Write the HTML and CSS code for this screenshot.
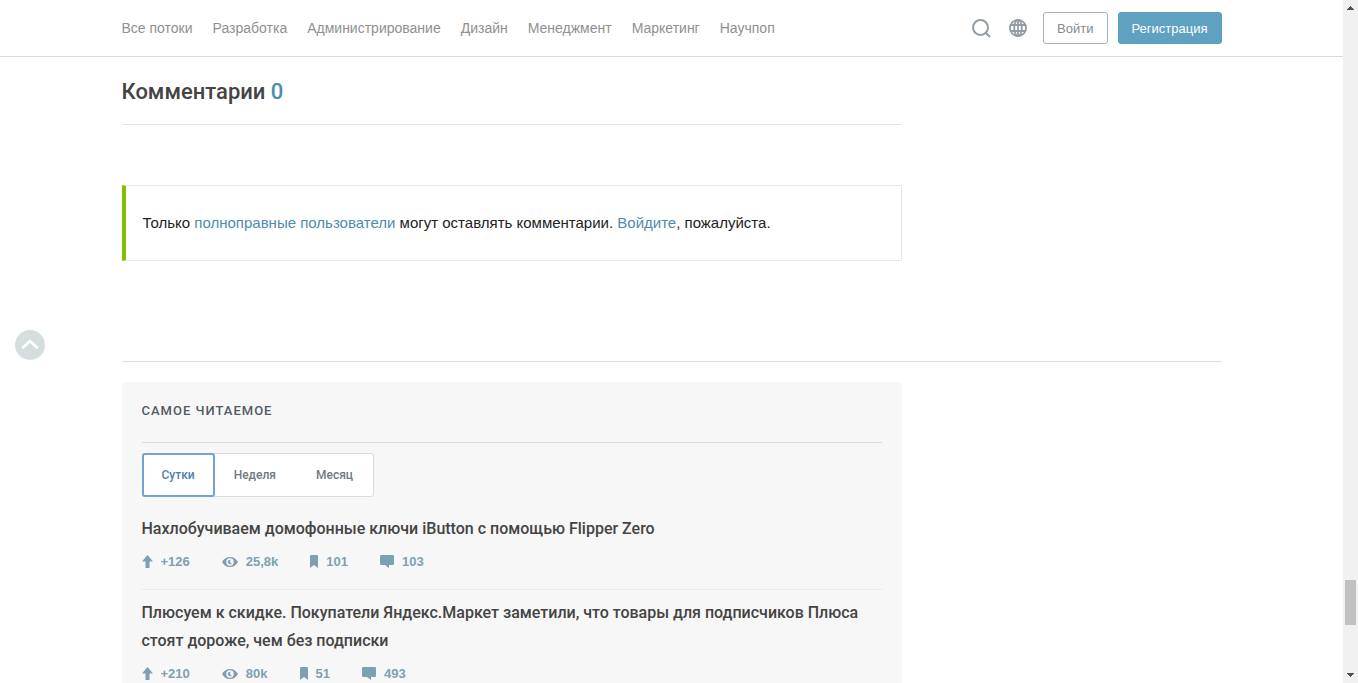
FILE: index.html
```html
<!DOCTYPE html>
<html lang="ru">
<head>
<meta charset="utf-8">
<meta name="viewport" content="width=device-width, initial-scale=1">
<title>Комментарии</title>
<link rel="stylesheet" href="styles.css">
</head>
<body class="window">
<svg class="sprite" aria-hidden="true">
  <symbol id="arrow" viewBox="0 0 11 13"><path d="M5.500 0 11 6.500H7.500V13h-4V6.500H0Z"/></symbol>
  <symbol id="eye" viewBox="0 0 16 10"><path fill-rule="evenodd" d="M8 0c3.600 0 6.500 2 8 5-1.500 3-4.400 5-8 5S1.500 8 0 5C1.500 2 4.400 0 8 0Zm0 1.300a3.700 3.700 0 1 0 0 7.400 3.700 3.700 0 0 0 0-7.400Z"/><path d="M8 2.800c.4 0 .7.100 1 .3a1.300 1.300 0 0 0 .9 2.900A2.200 2.200 0 1 1 8 2.800Z"/></symbol>
  <symbol id="bookmark" viewBox="0 0 8 13"><path d="M1 0h6q1 0 1 1v12l-4-3-4 3V1q0-1 1-1Z"/></symbol>
  <symbol id="comment" viewBox="0 0 14 13"><path d="M1 0h12q1 0 1 1v8q0 1-1 1H9v3l-4-3H1q-1 0-1-1V1q0-1 1-1Z"/></symbol>
</svg>
<div class="page">
  <header class="header">
    <div class="container header-row">
      <nav class="nav">
        <a href="#all">Все потоки</a>
        <a href="#dev">Разработка</a>
        <a href="#admin">Администрирование</a>
        <a href="#design">Дизайн</a>
        <a href="#management">Менеджмент</a>
        <a href="#marketing">Маркетинг</a>
        <a href="#popsci">Научпоп</a>
      </nav>
      <div class="actions">
        <button class="icon-button" type="button" aria-label="Поиск">
          <svg width="20" height="20" viewBox="0 0 20 20" fill="none" stroke="currentColor" stroke-width="2"><circle cx="9.500" cy="9.500" r="7.500"/><path d="m14.500 14.500 4.500 4.500"/></svg>
        </button>
        <button class="icon-button" type="button" aria-label="Язык">
          <svg width="20" height="20" viewBox="0 0 20 20" fill="none" stroke="currentColor" stroke-width="1.800"><circle cx="10" cy="10" r="8.100"/><ellipse cx="10" cy="10" rx="3.800" ry="8.100"/><path d="M2.500 7h15M2.500 13h15M10 2v16"/></svg>
        </button>
        <button class="button" type="button">Войти</button>
        <button class="button button-primary" type="button">Регистрация</button>
      </div>
    </div>
  </header>

  <main class="container">
    <section class="comments column">
      <h2 class="comments-title">Комментарии <span class="comments-count">0</span></h2>
      <p class="notice">Только <a href="#users">полноправные пользователи</a> могут оставлять комментарии. <a href="#login">Войдите</a>, пожалуйста.</p>
    </section>
    <div class="lower">
      <section class="popular column">
        <h3 class="popular-title">Самое читаемое</h3>
        <div class="tabs" role="tablist">
          <button class="tab tab-active" type="button" role="tab" aria-selected="true">Сутки</button>
          <button class="tab" type="button" role="tab" aria-selected="false">Неделя</button>
          <button class="tab" type="button" role="tab" aria-selected="false">Месяц</button>
        </div>
        <article class="post">
          <a class="post-title" href="#post-1">Нахлобучиваем домофонные ключи iButton с помощью Flipper Zero</a>
          <div class="stats">
            <span class="stat"><svg width="11" height="13"><use href="#arrow"/></svg>+126</span>
            <span class="stat"><svg width="16" height="10"><use href="#eye"/></svg>25,8k</span>
            <span class="stat"><svg width="8" height="13"><use href="#bookmark"/></svg>101</span>
            <span class="stat"><svg width="14" height="13"><use href="#comment"/></svg>103</span>
          </div>
        </article>
        <article class="post">
          <a class="post-title" href="#post-2">Плюсуем к скидке. Покупатели Яндекс.Маркет заметили, что товары для подписчиков Плюса стоят дороже, чем без подписки</a>
          <div class="stats">
            <span class="stat"><svg width="11" height="13"><use href="#arrow"/></svg>+210</span>
            <span class="stat"><svg width="16" height="10"><use href="#eye"/></svg>80k</span>
            <span class="stat"><svg width="8" height="13"><use href="#bookmark"/></svg>51</span>
            <span class="stat"><svg width="14" height="13"><use href="#comment"/></svg>493</span>
          </div>
        </article>
      </section>
    </div>
  </main>
  <button class="to-top" type="button" aria-label="Наверх">
    <svg width="30" height="30" viewBox="0 0 30 30" fill="none" stroke="currentColor" stroke-width="2.600" stroke-linecap="round" stroke-linejoin="round"><path d="m8 17.500 7-6.500 7 6.500"/></svg>
  </button>
</div>
<div class="scrollbar" aria-hidden="true">
  <svg width="7" height="4" viewBox="0 0 7 4"><path d="M3 0h1v1h1v1h1v1h1v1H0V3h1V2h1V1h1Z"/></svg>
  <div class="track"><div class="thumb"></div></div>
  <svg width="7" height="4" viewBox="0 0 7 4"><path d="M0 0h7v1H6v1H5v1H4v1H3V3H2V2H1V1H0Z"/></svg>
</div>
</body>
</html>
```

FILE: styles.css
```css
* {
  box-sizing: border-box;
}

.window {
  display: flex;
  height: 100vh;
  margin: 0;
  overflow: hidden;
  background: #fff;
  color: #333;
  font-family: "Liberation Sans", Arial, sans-serif;
}

.sprite {
  position: absolute;
  width: 0;
  height: 0;
}

a {
  color: inherit;
  text-decoration: none;
}

button {
  font-family: inherit;
  cursor: pointer;
}

.page {
  flex: 1;
  min-width: 0;
  overflow: hidden;
}

.container {
  max-width: 1100px;
  margin: 0 auto;
}

.column {
  max-width: 780px;
}

.header {
  border-bottom: 1px solid #d1dcdf;
}

.header-row {
  display: flex;
  align-items: center;
  justify-content: space-between;
  padding: 12px 0;
}

.nav {
  display: flex;
  gap: 20px;
  color: #909090;
  font-size: 14px;
}

.actions {
  display: flex;
  align-items: center;
  gap: 10px;
}

.icon-button {
  display: flex;
  margin-right: 7px;
  padding: 0;
  border: 0;
  background: none;
  color: #929ca5;
}

.icon-button + .button {
  margin-left: -2px;
}

.button {
  height: 32px;
  padding: 0 13px;
  border: 1px solid #a4afba;
  border-radius: 3px;
  background: #fff;
  color: #838a92;
  font-size: 13px;
}

.button-primary {
  border-color: #5e9fbf;
  background: #5fa1c1;
  color: #fff;
}

.comments-title {
  margin: 0 0 60px;
  padding: 19px 0 16px;
  border-bottom: 1px solid #e3e5e5;
  color: #444;
  font: 500 22px/32px Roboto, sans-serif;
}

.comments-count {
  color: #4d8bb0;
}

.notice {
  margin: 0 0 100px;
  padding: 25px 17px;
  border: 1px solid #e7e7e7;
  border-left: 4px solid #7fc100;
  color: #222;
  font-size: 15px;
  line-height: 24px;
}

.notice a {
  color: #4d8bb0;
}

.lower {
  padding-top: 20px;
  border-top: 1px solid #dde1e2;
}

.popular {
  padding: 20px 20px 0;
  border-radius: 4px;
  background: #f7f7f7;
}

.popular-title {
  margin: 0 0 10px;
  padding-bottom: 22px;
  border-bottom: 1px solid #d1dcdf;
  color: #535b63;
  font: 500 13px/18px Roboto, sans-serif;
  letter-spacing: 1px;
  text-transform: uppercase;
}

.tabs {
  display: inline-flex;
  height: 44px;
  border: 1px solid #d5dddf;
  border-radius: 3px;
  background: #fff;
}

.tab {
  padding: 0 20px;
  border: 0;
  background: none;
  color: #6f7a83;
  font: 500 12px/20px Roboto, sans-serif;
}

.tab-active {
  margin: -1px;
  padding: 0 18px;
  border: 2px solid #75a3d1;
  border-radius: 3px;
  background: #fff;
  color: #4d7eb2;
}

.post {
  padding: 18px 0;
}

.post + .post {
  padding-top: 9px;
  border-top: 1px solid #ebebeb;
}

.post-title {
  display: block;
  margin-bottom: 10px;
  color: #444;
  font: 500 16px/28px Roboto, sans-serif;
}

.stats {
  display: flex;
  gap: 32px;
  color: #7ea1b2;
  font-size: 13px;
  font-weight: 700;
  line-height: 18px;
}

.stat {
  display: flex;
  align-items: center;
  gap: 8px;
}

.stat svg {
  margin-bottom: 1px;
  fill: currentColor;
}

.to-top {
  position: absolute;
  top: calc(50vh - 12px);
  left: 15px;
  display: flex;
  padding: 0;
  border: 0;
  border-radius: 50%;
  background: #d5dddf;
  color: #fff;
}

.scrollbar {
  display: flex;
  flex-direction: column;
  align-items: center;
  gap: 6px;
  width: 15px;
  padding: 6px 0;
  background: #f1f1f1;
  fill: #505050;
}

.track {
  display: flex;
  flex: 1;
  flex-direction: column;
  justify-content: flex-end;
  padding-bottom: 42px;
}

.thumb {
  width: 11px;
  height: 45px;
  background: #c1c1c1;
}
```
